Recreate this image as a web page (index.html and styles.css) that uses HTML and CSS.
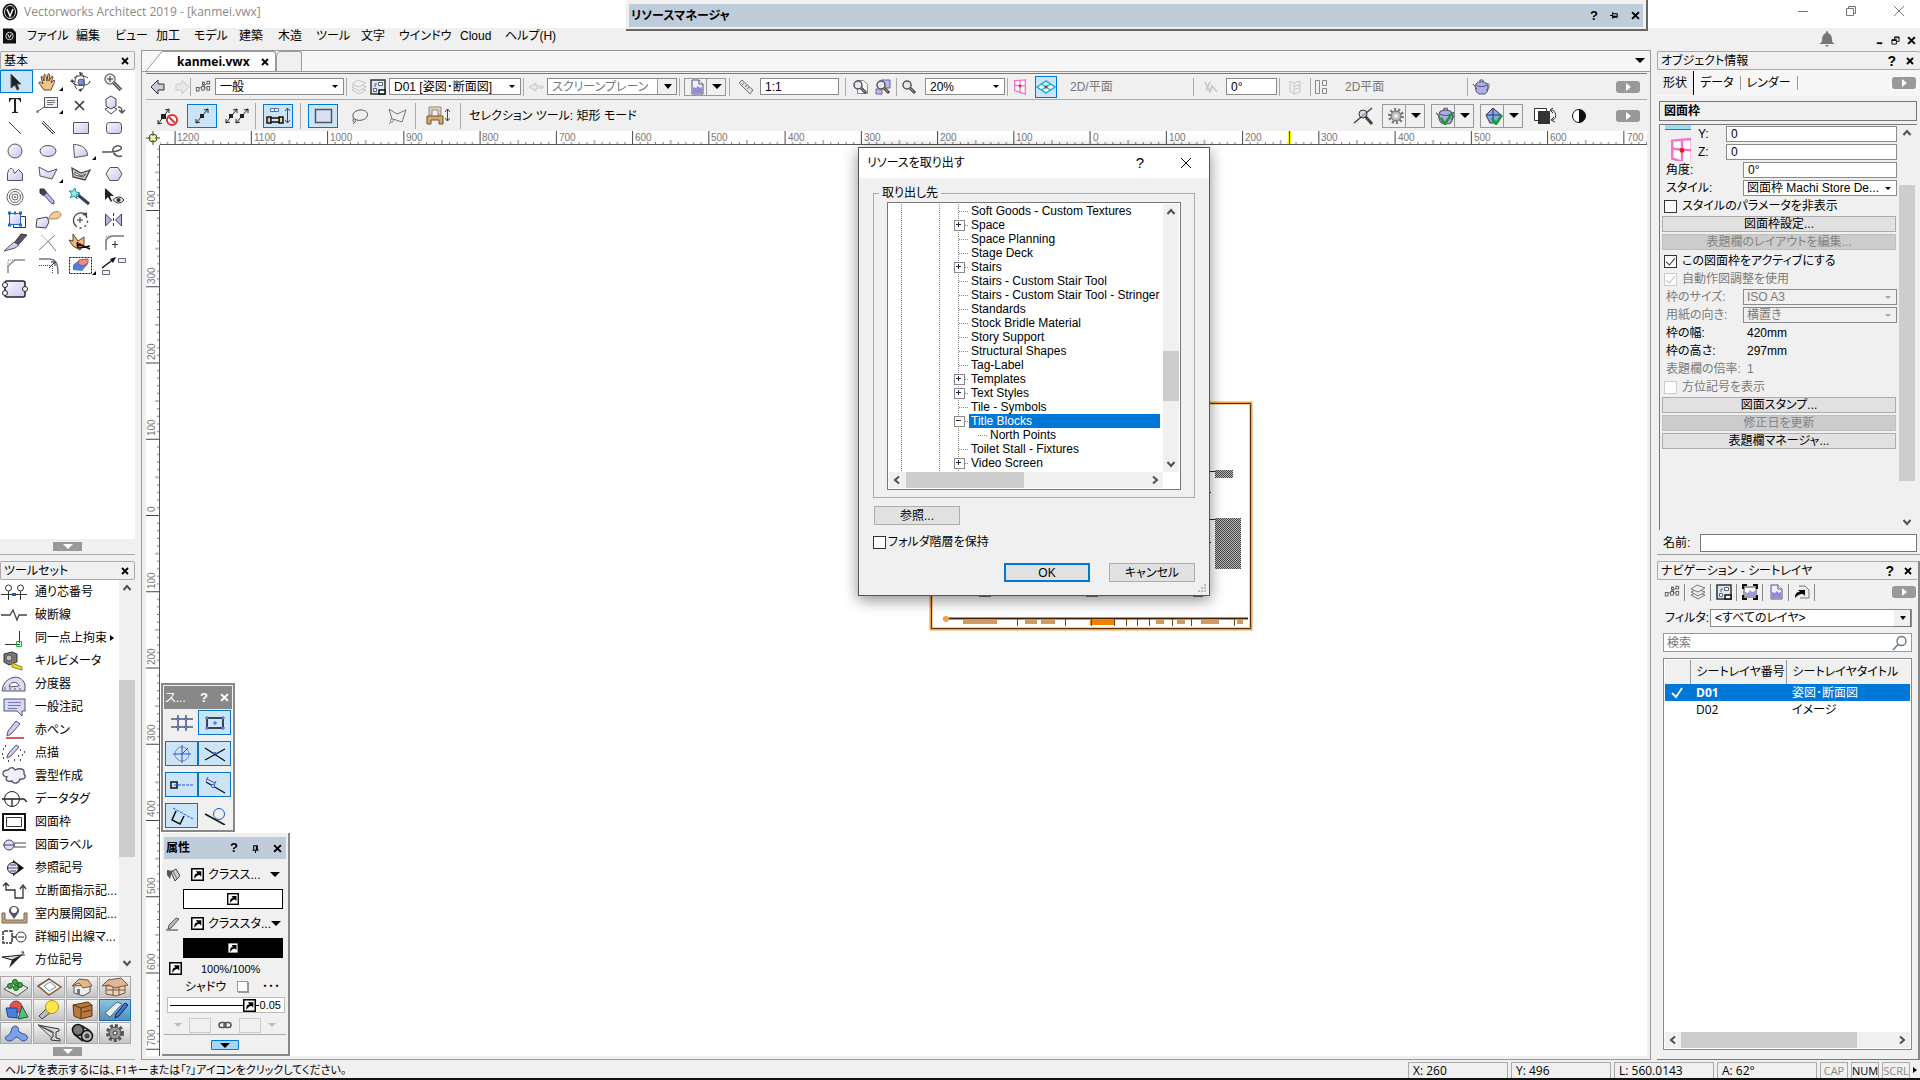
FILE: index.html
```html
<!DOCTYPE html>
<html lang="ja">
<head>
<meta charset="utf-8">
<title>Vectorworks Architect 2019 - [kanmei.vwx]</title>
<link rel="stylesheet" href="styles.css">
</head>
<body>
<svg class="defs" aria-hidden="true">
  <defs>
    <linearGradient id="lav" x1="0" y1="0" x2="1" y2="1"><stop offset="0" stop-color="#fbfbff"/><stop offset="1" stop-color="#c6c6f0"/></linearGradient>
    <symbol id="i-x" viewBox="0 0 8 8"><path d="M1 1l6 6M7 1l-6 6" stroke="currentColor" stroke-width="1.8" fill="none"/></symbol>
    <symbol id="i-pin" viewBox="0 0 10 10"><path d="M0 5h3M3 1.500v7M3 3h5v4h-5M3 6h5" stroke="currentColor" stroke-width="1.200" fill="none"/></symbol>
    <symbol id="i-up" viewBox="0 0 10 10"><path d="M1.500 7L5 3l3.500 4" stroke="#505050" stroke-width="2" fill="none"/></symbol>
    <symbol id="i-down" viewBox="0 0 10 10"><path d="M1.500 3L5 7l3.500-4" stroke="#505050" stroke-width="2" fill="none"/></symbol>
    <symbol id="i-left" viewBox="0 0 10 10"><path d="M7 1.500L3 5l4 3.500" stroke="#505050" stroke-width="2" fill="none"/></symbol>
    <symbol id="i-right" viewBox="0 0 10 10"><path d="M3 1.500L7 5l-4 3.500" stroke="#505050" stroke-width="2" fill="none"/></symbol>
    <symbol id="i-class" viewBox="0 0 18 16"><path d="M3 10l6-2 5-5M9 8l6 2M9 8V4" stroke="#666" fill="none"/><g fill="#f4f4f4" stroke="#555"><rect x="1.500" y="8.500" width="3" height="4"/><rect x="7.500" y="7.500" width="3" height="4"/><rect x="8.500" y="2.500" width="2" height="3"/><rect x="13.500" y="1.500" width="3" height="3"/><rect x="13.500" y="7.500" width="3" height="4"/></g></symbol>
    <symbol id="i-layers" viewBox="0 0 16 16"><g fill="#eee" stroke="#777"><path d="M1 11l6-3 8 3-7 4z"/><path d="M1 8l6-3 8 3-7 4z"/><path d="M1 5l6-4 8 3-7 4z"/></g></symbol>
    <symbol id="i-sheet" viewBox="0 0 16 16"><rect x="1" y="1" width="14" height="14" fill="#dde6f2" stroke="#333" stroke-width="1.500"/><path d="M3.500 9.500h3v3h-3zM8.500 3.500h4v3h-4z" fill="#fff" stroke="#567"/><path d="M5 8V5h2" fill="none" stroke="#567"/><path d="M9 11h6v4h-6z" fill="#fff" stroke="#111" stroke-width="1.500"/></symbol>
    <symbol id="i-view" viewBox="0 0 16 16"><rect x="2" y="3" width="12" height="10" fill="#fff" stroke="#444"/><path d="M3 12V8l3 1 2-3 2 2 3-1v5z" fill="#9a9ae0"/><path d="M1 5V1h4M11 1h4v4M15 11v4h-4M5 15H1v-4" fill="none" stroke="#111" stroke-width="2"/></symbol>
    <symbol id="i-doc" viewBox="0 0 16 16"><path d="M3 1h7l4 4v10H3z" fill="#eeeeff" stroke="#556"/><path d="M10 1v4h4" fill="#fff" stroke="#556"/><path d="M4 14V8l3 1 2-2 2 2 2-1v6z" fill="#8c8cd8"/></symbol>
    <symbol id="i-ref" viewBox="0 0 16 16"><path d="M5 2h6l4 4v8H6" fill="#eee" stroke="#777"/><path d="M1 14c0-5 2-6 5-6L4 6h7v6L9 10c-4 0-5 1-8 4z" fill="#000"/></symbol>
    <symbol id="i-glass" viewBox="0 0 16 16"><path d="M8 8l6 6" stroke="#444" stroke-width="3"/><path d="M8 8l5 5" stroke="#c9a45a" stroke-width="1"/><circle cx="6" cy="6" r="4" fill="#dfe8f4" stroke="#555" stroke-width="1.500"/></symbol>
    <symbol id="i-class-style" viewBox="0 0 12 12"><rect x=".7" y=".7" width="10.600" height="10.600" fill="#fff" stroke="#000" stroke-width="1.400"/><path d="M3 10c0-4 1-5 3-5L4.500 3H9.500v5L8 6.500C5.500 6.500 5 8 3 10z" fill="#000"/></symbol>
    <symbol id="i-pink" viewBox="0 0 16 18"><path d="M2 2l12-1v16L2 13z" fill="#fff" stroke="#f474c8" stroke-width="1.500"/><path d="M8 2v13M2 7l12 1" stroke="#f474c8" stroke-width="1.500"/><circle cx="8" cy="8" r="1.500" fill="#d22"/></symbol>
    <symbol id="i-teapot" viewBox="0 0 18 16"><path d="M4 5c2-3 9-3 11 0 2 4 1 8-2 10H7C3 13 3 8 4 5z" fill="#aeaee8" stroke="#557"/><path d="M5 10L1 5M15 5c3-2 3 5-1 6M4 6c3 2 8 2 11 0M8 3V1h3v2" stroke="#557" fill="none"/></symbol>
  </defs>
</svg>

<header class="titlebar">
  <svg class="logo" viewBox="0 0 16 18"><ellipse cx="8" cy="9" rx="7.500" ry="8.500" fill="#111"/><ellipse cx="8" cy="9" rx="5.500" ry="6.500" fill="none" stroke="#ddd"/><path d="M5 6l3 7 3-7" stroke="#fff" stroke-width="1.500" fill="none"/></svg>
  <h1>Vectorworks Architect 2019 - [kanmei.vwx]</h1>
  <div class="wincontrols">
    <button aria-label="最小化"><svg viewBox="0 0 12 12"><path d="M1 6.500h10" stroke="#777"/></svg></button>
    <button aria-label="元に戻す"><svg viewBox="0 0 12 12"><path d="M1.500 3.500h7v7h-7zM3.500 3V1.500h7v7H9" stroke="#777" fill="none"/></svg></button>
    <button aria-label="閉じる"><svg viewBox="0 0 12 12"><path d="M1 1l10 10M11 1L1 11" stroke="#777"/></svg></button>
  </div>
</header>

<nav class="menubar">
  <svg class="docicon" viewBox="0 0 14 16"><path d="M0 0h10l4 4v12H0z" fill="#111"/><circle cx="7" cy="8" r="4" fill="none" stroke="#ddd"/><path d="M5 6l2 4 2-4" stroke="#fff" fill="none"/></svg>
  <ul>
    <li>ファイル</li><li>編集</li><li>ビュー</li><li>加工</li><li>モデル</li><li>建築</li><li>木造</li><li>ツール</li><li>文字</li><li>ウインドウ</li><li>Cloud</li><li>ヘルプ(H)</li>
  </ul>
  <svg class="bell" viewBox="0 0 16 16"><path d="M8 0c1 0 1 1 1 2 3 1 4 4 4 7 0 2 1 3 3 4H0c2-1 3-2 3-4 0-3 1-6 4-7 0-1 0-2 1-2z" fill="#777"/><path d="M6 14h4l-2 2z" fill="#777"/></svg>
  <div class="mdi">
    <button aria-label="最小化"><svg viewBox="0 0 10 10"><path d="M2 8h6" stroke="#000" stroke-width="2"/></svg></button>
    <button aria-label="元に戻す"><svg viewBox="0 0 10 10"><path d="M1 4h5v5H1zM4 4V1h5v5H6M4 2h5M1 5h5" stroke="#000" fill="none"/></svg></button>
    <button aria-label="閉じる"><svg><use href="#i-x"/></svg></button>
  </div>
</nav>

<main class="workspace">
  <aside class="left">
    <section class="basic">
      <header class="phead"><h2>基本</h2><button aria-label="閉じる"><svg><use href="#i-x"/></svg></button></header>
      <div class="tools">
        <button class="on"><svg viewBox="0 0 28 20"><path d="M10 2v14l4-3 2 5 2-1-2-5h4z" fill="#222" stroke="#555"/></svg></button>
        <button class="more"><svg viewBox="0 0 28 20"><path d="M10 18L5 11c0-2 2-1 4 1L7 5c1-2 2 0 3 4V3c1-2 2 0 3 6l1-7c2-1 2 2 1 7l3-5c2 0 0 4-1 7l3-3c2 0-1 5-3 10z" fill="#f3c48c" stroke="#5b4632"/></svg></button>
        <button><svg viewBox="0 0 28 20"><path d="M13 1c5 0 6 17 1 17M5 9c0 6 18 6 18 0M10 3c-3 6-3 12 0 14M7 6c4-3 10-3 14 0" fill="none" stroke="#444"/><circle cx="14" cy="10" r="3" fill="#7c8fd8" stroke="#557"/><path d="M12 0l4 1-3 3zM3 10l2-3 3 3zM14 20l1-4-4 2z" fill="#444"/></svg></button>
        <button><svg viewBox="0 0 28 20"><path d="M13 10l8 8" stroke="#555" stroke-width="3.500"/><path d="M13 10l8 8" stroke="#bbb"/><circle cx="10" cy="7" r="5" fill="#eef" stroke="#777" stroke-width="1.500"/><path d="M7 7h6M10 4v6" stroke="#333"/></svg></button>

        <button><svg viewBox="0 0 28 20"><path d="M8 3h12v4h-1c0-2-1-3-4-3v12c0 1 1 1 2 1v1h-6v-1c1 0 2 0 2-1V4c-3 0-4 1-4 3H8z" fill="#222"/></svg></button>
        <button class="more"><svg viewBox="0 0 28 20"><path d="M10.500 2.500h13v10h-13z" fill="#eeeeff" stroke="#555"/><path d="M10 12l-7 5" stroke="#555"/><path d="M13 5.500h8M13 7.500h8M13 9.500h6" stroke="#777"/><circle cx="3.500" cy="16.500" r="1.500" fill="#888"/></svg></button>
        <button><svg viewBox="0 0 28 20"><path d="M8 6l9 9M17 6l-9 9" stroke="#243a30" stroke-width="1.500"/></svg></button>
        <button><svg viewBox="0 0 28 20"><path d="M5 14l6-3 6 3-6 5z" fill="#fff" stroke="#445"/><path d="M11 1l5 3v7l-5 3-5-3V4z" fill="url(#lav)" stroke="#445"/><path d="M18 12c3 0 4 1 4 5M19 15l3 3 3-3" stroke="#555" fill="none" stroke-width="1.500"/></svg></button>

        <button><svg viewBox="0 0 28 20"><path d="M8 4l12 12" stroke="#444"/></svg></button>
        <button><svg viewBox="0 0 28 20"><path d="M8 5l11 11M9 3l12 12" stroke="#444"/><path d="M8 4l12 12" stroke="#aaa"/></svg></button>
        <button><svg viewBox="0 0 28 20"><path d="M6.500 4.500h15v11h-15z" fill="url(#lav)" stroke="#555"/></svg></button>
        <button><svg viewBox="0 0 28 20"><rect x="6.500" y="4.500" width="15" height="11" rx="3" fill="url(#lav)" stroke="#555"/></svg></button>

        <button><svg viewBox="0 0 28 20"><circle cx="14" cy="10" r="7" fill="url(#lav)" stroke="#555"/></svg></button>
        <button><svg viewBox="0 0 28 20"><ellipse cx="14" cy="10" rx="8" ry="5.500" fill="url(#lav)" stroke="#555"/></svg></button>
        <button class="more"><svg viewBox="0 0 28 20"><path d="M6.500 3.500c8 0 14 4 14 11l-13 2z" fill="url(#lav)" stroke="#555"/></svg></button>
        <button><svg viewBox="0 0 28 20"><path d="M2 11h8c8 0 13-3 11-5-3-3-9 0-8 4 1 5 6 6 9 5" fill="none" stroke="#555" stroke-width="1.500"/></svg></button>

        <button><svg viewBox="0 0 28 20"><path d="M6.500 16.500v-7c2-7 5-7 7 0l4-4 4 4v7z" fill="url(#lav)" stroke="#555"/></svg></button>
        <button class="more"><svg viewBox="0 0 28 20"><path d="M5 3l9 5 9-3-5 10-12-3z" fill="url(#lav)" stroke="#555"/></svg></button>
        <button><svg viewBox="0 0 28 20"><path d="M5 4l9 5 9-3-5 10-12-3z" fill="#ccc" stroke="#444" stroke-width="1.300"/><path d="M8 8l6 4 5-2-3 3-8-2z" fill="#fff" stroke="#555"/></svg></button>
        <button><svg viewBox="0 0 28 20"><path d="M10 3.500h8l4 6.500-4 6.500h-8L6 10z" fill="url(#lav)" stroke="#555"/></svg></button>

        <button><svg viewBox="0 0 28 20"><g fill="none" stroke="#666"><circle cx="14" cy="10" r="8"/><circle cx="14" cy="10" r="5.500"/><circle cx="14" cy="10" r="3"/><circle cx="14" cy="10" r=".6"/></g></svg></button>
        <button><svg viewBox="0 0 28 20"><path d="M6 2l4 0 3 4-3 3-4-3z" fill="#444" stroke="#333"/><path d="M10 8l3-2 7 8v3l-3-1z" fill="#b9b9f0" stroke="#557"/></svg></button>
        <button><svg viewBox="0 0 28 20"><path d="M11 8l11 9" stroke="#345" stroke-width="3"/><path d="M8 1l1 4 4 1-4 2 1 4-3-3-4 2 2-4-3-3 4 0z" fill="#8ff0f0" stroke="#2b8f9c"/></svg></button>
        <button><svg viewBox="0 0 28 20"><path d="M5 1v12l3-3 3 5 1-1-2-5h4z" fill="#222"/><path d="M13 13c3-4 8-4 11 0-3 4-8 4-11 0z" fill="#ddd" stroke="#333"/><circle cx="18.500" cy="13" r="2" fill="#333"/></svg></button>

        <button><svg viewBox="0 0 28 20"><path d="M12.500 6.500h12v11h-12z" fill="#fff" stroke="#333"/><path d="M8.500 3.500h11v11h-11z" fill="url(#lav)" stroke="#1c6fc4"/><path d="M7 3h3M18 3h3M7 15h3M18 15h3M13 3h2M8 9h1M19 9h1" stroke="#1c6fc4" stroke-width="3"/></svg></button>
        <button><svg viewBox="0 0 28 20"><path d="M3 9l10-2 2 5-3 6-10-1z" fill="url(#lav)" stroke="#444"/><path d="M14 9l4-6c5-3 9-1 9 2-1 4-6 4-11 4z" fill="#f5cb98" stroke="#a9855c"/></svg></button>
        <button><svg viewBox="0 0 28 20"><path d="M18 4A7.500 7.500 0 1 0 10 17" fill="none" stroke="#444" stroke-width="1.300"/><path d="M19 6a7.500 7.500 0 0 1-7 12" fill="none" stroke="#444" stroke-width="1.500" stroke-dasharray="2 3"/><path d="M15 5l5-3v4z" fill="#444"/><path d="M10 10h6M13 7v6" stroke="#333"/></svg></button>
        <button><svg viewBox="0 0 28 20"><path d="M5.500 4v12l6-6zM21.500 4v12l-6-6z" fill="#b5b5ea" stroke="#445"/><path d="M13.500 3v15" stroke="#333" stroke-dasharray="3 2"/></svg></button>

        <button><svg viewBox="0 0 28 20"><path d="M14 9l6-8 6 1-9 10z" fill="#556" stroke="#333"/><path d="M3 18l10-9 5 3-4 3z" fill="#ccf" stroke="#555"/></svg></button>
        <button><svg viewBox="0 0 28 20"><path d="M5 17L21 2M14 8l8 10" stroke="#777"/><path d="M14 8L7 2" stroke="#bbc"/></svg></button>
        <button><svg viewBox="0 0 28 20"><path d="M6 1l5 7 6-4v7l-4 6-7-4-4-6 4 1z" fill="#f3b775" stroke="#5b4632"/><path d="M12 11l11 5M12 15l11-2M11 9a2 2 0 1 0 3 3 2 2 0 1 0-2 3" stroke="#111" fill="none" stroke-width="1.500"/></svg></button>
        <button><svg viewBox="0 0 28 20"><path d="M6 17V10c0-5 3-7 8-7h10" fill="none" stroke="#778" stroke-width="1.500"/><path d="M6 9V3h8" stroke="#888" fill="none" stroke-dasharray="1 1"/><path d="M12 11.500h6M15 8v7" stroke="#333"/></svg></button>

        <button><svg viewBox="0 0 28 20"><path d="M7 17v-7l7-6h10" fill="none" stroke="#889" stroke-width="1.500"/><path d="M7 10V4h8" stroke="#777" fill="none" stroke-dasharray="1 1"/></svg></button>
        <button><svg viewBox="0 0 28 20"><path d="M5 3h9c8 0 10 4 10 15" fill="none" stroke="#778" stroke-width="1.500"/><path d="M5 9.500h12M18.500 17V9" stroke="#444" fill="none" stroke-dasharray="1 1"/><path d="M15 12l6-6M17 6h4v4" stroke="#223" fill="none"/></svg></button>
        <button class="more"><svg viewBox="0 0 28 20"><rect x="2.500" y="1.500" width="22" height="16" fill="none" stroke="#111" stroke-dasharray="2 1"/><path d="M6 9l6-5 9-1v5l-6 7-9-1z" fill="#4b7fe0"/><path d="M12 4l9-1v4l-5 3-5-2z" fill="#f08a8a" stroke="#a55"/></svg></button>
        <button><svg viewBox="0 0 28 20"><path d="M2 12L15 2" stroke="#111" stroke-width="1.500"/><path d="M16 1l-6 2 3 4z" fill="#111"/><path d="M18.500 2.500h7v4h-7zM2.500 14.500h7v4h-7z" fill="#eef" stroke="#667"/></svg></button>

        <button><svg viewBox="0 0 28 20"><rect x="4" y="2" width="20" height="16" rx="2" fill="url(#lav)" stroke="#223" stroke-width="1.500"/><g fill="#fff" stroke="#223"><circle cx="4" cy="6" r="2.500"/><circle cx="4" cy="14" r="2.500"/><circle cx="24" cy="10" r="2.500"/></g></svg></button>
      </div>
      <button class="fold" aria-label="折りたたむ"></button>
    </section>

    <section class="toolset">
      <header class="phead"><h2>ツールセット</h2><button aria-label="閉じる"><svg><use href="#i-x"/></svg></button></header>
      <div class="setbody">
        <ul>
          <li><svg viewBox="0 0 28 20"><path d="M1 12.500h26M8.500 9v9M20.500 9v9" stroke="#333"/><circle cx="8.500" cy="6" r="3" fill="#fff" stroke="#333"/><circle cx="20.500" cy="6" r="3" fill="#fff" stroke="#333"/><path d="M12 11h4v3h-4z" fill="#25d"/></svg>通り芯番号</li>
          <li><svg viewBox="0 0 28 20"><path d="M1 10h9l3-5 4 10 2-5h8" stroke="#444" stroke-width="1.300" fill="none"/></svg>破断線</li>
          <li><svg viewBox="0 0 28 20"><path d="M5 16.500h15M19.500 3v12" stroke="#333"/><path d="M16.500 13.500h5v5h-5z" stroke="#1b3" fill="none"/></svg>同一点上拘束<i class="sub"></i></li>
          <li><svg viewBox="0 0 28 20"><path d="M4 3l8-2 5 2v8l-8 3-5-3z" fill="#777" stroke="#333"/><circle cx="9" cy="7" r="3" fill="#bbb" stroke="#555"/><path d="M12 12l10 4v3l-10-3z" fill="#ecd82c" stroke="#99801a"/></svg>キルビメータ</li>
          <li><svg viewBox="0 0 28 20"><path d="M2 17C3 2 22-2 25 11v6z" fill="#dcdcf8" stroke="#555"/><path d="M9 13c1-6 9-6 10-1z" fill="#fff" stroke="#556"/><path d="M5 16v-3M10 16v-2M15 16v-2M20 16v-2" stroke="#556"/></svg>分度器</li>
          <li><svg viewBox="0 0 28 20"><path d="M4 2h21v12h-3v5l-5-5H4z" fill="#d5d8fa" stroke="#556"/><path d="M8 5.500h13M8 8.500h13M8 11.500h9" stroke="#77a"/></svg>一般注記</li>
          <li><svg viewBox="0 0 28 20"><path d="M6 18h18" stroke="#c22" stroke-width="1.500"/><path d="M7 16l1-5 8-10 4 3-9 10z" fill="#cfcff4" stroke="#556"/></svg>赤ペン</li>
          <li><svg viewBox="0 0 28 20"><path d="M7 15l1-4 8-9 3 2-8 9z" fill="#cfcff4" stroke="#556"/><path d="M3 6h1M5 3h1M2 11h1M20 7h1M22 12h1M18 13h1M14 17h1M8 18h1M24 9h1M20 17h1M3 15h1" stroke="#111" stroke-width="1.500"/></svg>点描</li>
          <li><svg viewBox="0 0 28 20"><path d="M8 4c3-4 6-2 7 0 7-3 10 0 9 4 3 3 0 6-4 5-1 5-7 5-8 2-5 1-7-1-5-4C1 10 2 4 8 4z" fill="#eeeefc" stroke="#556" stroke-width="1.300"/></svg>雲型作成</li>
          <li><svg viewBox="0 0 28 20"><circle cx="12" cy="10" r="7.500" fill="#fff" stroke="#222"/><path d="M2 10h22l3 3M12 10v7" stroke="#222" stroke-width="1.300" fill="none"/></svg>データタグ</li>
          <li><svg viewBox="0 0 28 20"><path d="M3 2h22v16H3z" fill="#fff" stroke="#111" stroke-width="2"/><path d="M6.500 5.500h15v9h-15z" stroke="#333" fill="none"/></svg>図面枠</li>
          <li><svg viewBox="0 0 28 20"><circle cx="9" cy="10" r="5" fill="#dcdcf8" stroke="#445"/><path d="M3 10h12M14 8h12M14 12h12" stroke="#445"/></svg>図面ラベル</li>
          <li><svg viewBox="0 0 28 20"><path d="M13 2l11 8-11 8z" fill="#111"/><circle cx="13" cy="10" r="5.500" fill="#e6e6ff" stroke="#222"/><path d="M8 10h10M10 7h6M10 13h6" stroke="#446"/></svg>参照記号</li>
          <li><svg viewBox="0 0 28 20"><path d="M6 2v7h9v8h8V6M3 5l3-3 3 3M20 8l3-4 3 4" fill="none" stroke="#333" stroke-width="1.300"/></svg>立断面指示記...</li>
          <li><svg viewBox="0 0 28 20"><path d="M2 9h3v7h19V9h3v10H2z" fill="#c8a27a" stroke="#765"/><path d="M14 15L9 8c-1-8 11-8 10 0z" fill="#556"/><circle cx="14" cy="6" r="3" fill="#fff"/></svg>室内展開図記...</li>
          <li><svg viewBox="0 0 28 20"><path d="M8 4H3v12h5M9 4h3v12H9M12 10h4" fill="none" stroke="#333" stroke-width="1.500" stroke-dasharray="4 1"/><circle cx="21" cy="10" r="5" fill="#fff" stroke="#333"/><path d="M18 10h6" stroke="#333"/></svg>詳細引出線マ...</li>
          <li><svg viewBox="0 0 28 20"><path d="M2 7l20-2L9 18l3-8z" fill="#222"/><path d="M2 7l20-2-10 5z" fill="#ddd" stroke="#222"/><path d="M21 2h3l-2 3h3" stroke="#333" fill="none"/></svg>方位記号</li>
        </ul>
        <div class="vbar"><svg><use href="#i-up"/></svg><span class="track"><span class="thumb"></span></span><svg><use href="#i-down"/></svg></div>
      </div>
      <div class="sets">
        <button><svg viewBox="0 0 28 20"><path d="M2 12l11-8 13 7-11 8z" fill="#e6e6e6" stroke="#555"/><g fill="#3fae3a" stroke="#175a17"><circle cx="8" cy="9" r="2.500"/><circle cx="13" cy="5" r="2.500"/><circle cx="18" cy="8" r="2.500"/><circle cx="14" cy="11" r="2.500"/></g></svg></button>
        <button><svg viewBox="0 0 28 20"><path d="M3 9l11-7 12 8-12 8z" fill="#eef6fa" stroke="#8b5a2b" stroke-width="1.500"/><path d="M9 9l6-4 6 5-7 4z" fill="#fff" stroke="#79a"/></svg></button>
        <button><svg viewBox="0 0 28 20"><path d="M6 9v7l9 3 7-4V8z" fill="#eee" stroke="#555"/><path d="M4 9l7-7 9 1 4 6-9 2-4-5z" fill="#e8b586" stroke="#754"/><path d="M9 12h3v6H9z" fill="#777"/></svg></button>
        <button><svg viewBox="0 0 28 20"><path d="M5 9v8l10 2 9-3V8z" fill="#ecd2b4" stroke="#754"/><path d="M1 9l6-6 13-2 7 7-13 3-6-3z" fill="#dcb896" stroke="#754"/><path d="M5 13h19M12 10v8M18 10v8" stroke="#754"/></svg></button>
        <button><svg viewBox="0 0 28 20"><circle cx="14" cy="7" r="6" fill="#e25454" stroke="#833"/><path d="M4 8h11v10l-9-1z" fill="#4b7fe0" stroke="#248"/><path d="M20 6l6 11-10 2z" fill="#57c080" stroke="#175a37"/></svg></button>
        <button><svg viewBox="0 0 28 20"><path d="M4 16l7-7 4 4-8 6z" fill="#bbb" stroke="#444"/><circle cx="17" cy="7" r="6.500" fill="#ffe748" stroke="#a8941c"/></svg></button>
        <button><svg viewBox="0 0 28 20"><path d="M5 5l15-3 4 3v11l-11 3-7-3z" fill="#b9793e" stroke="#5a3515"/><path d="M5 5l8 3 11-3M13 8v10M15 12l8-2" stroke="#5a3515" fill="none"/></svg></button>
        <button class="on"><svg viewBox="0 0 28 20"><path d="M4 13L16 2l5 2L9 17z" fill="#e6eef5" stroke="#567"/><path d="M14 18l1-4 9-11 3 2-9 11z" fill="#3c78e0" stroke="#124"/></svg></button>
        <button><svg viewBox="0 0 28 20"><path d="M5 13c3-1 4-4 5-8 3-4 8-1 6 3l5 3c5 0 6 6 1 7-4 0-4-3-7-4-3 0-4 4-7 4-5 0-6-4-3-5z" fill="#7da2e8" stroke="#2c4f9c"/></svg></button>
        <button><svg viewBox="0 0 28 20"><path d="M3 2l21 4v2l-3 1v6l4 1v2l-9-1v-2l2-1V9z" fill="#d9d9d9" stroke="#333"/><path d="M3 2l14 13M3 2l15 8" stroke="#555"/></svg></button>
        <button><svg viewBox="0 0 28 20"><circle cx="10" cy="7" r="5.500" fill="#777" stroke="#111" stroke-width="1.500"/><path d="M6 11l9 7M14 3l8 5" stroke="#222" stroke-width="2"/><circle cx="19" cy="13" r="5.500" fill="#bbb" stroke="#111" stroke-width="1.500"/><circle cx="19" cy="13" r="2.500" fill="#444"/></svg></button>
        <button><svg viewBox="0 0 28 20"><circle cx="14" cy="10" r="7.500" fill="none" stroke="#555" stroke-width="3" stroke-dasharray="3 2"/><circle cx="14" cy="10" r="6" fill="#999" stroke="#444"/><circle cx="14" cy="10" r="2" fill="#eee" stroke="#333"/></svg></button>
      </div>
      <button class="fold" aria-label="折りたたむ"></button>
    </section>
  </aside>

  <section class="docwin">
    <div class="tabs">
      <svg class="tabedge" viewBox="0 0 18 20" preserveAspectRatio="none"><path d="M0 20L16 1h2v19z" fill="#fff"/><path d="M0 20L16 .5h2" fill="none" stroke="#999"/></svg>
      <div class="tab">kanmei.vwx <button aria-label="タブを閉じる"><svg><use href="#i-x"/></svg></button></div>
      <div class="newtab"></div>
      <i class="tri"></i>
    </div>

    <div class="viewbar">
      <div class="grp g1"><svg viewBox="0 0 16 16"><path d="M1 8l7-7v4h6v6H8v4z" fill="#ccd" stroke="#333"/></svg><svg viewBox="0 0 16 16"><path d="M15 8L8 1v4H2v6h6v4z" fill="#e8e8e8" stroke="#ccc"/></svg></div>
      <div class="grp g2"><svg><use href="#i-class"/></svg><span class="combo"><select aria-label="クラス"><option>一般</option></select></span></div>
      <div class="grp g3"><svg class="dim"><use href="#i-layers"/></svg><svg><use href="#i-sheet"/></svg><span class="combo"><select aria-label="レイヤ"><option>D01 [姿図･断面図]</option></select></span></div>
      <div class="grp g4"><svg class="dim" viewBox="0 0 16 16"><path d="M1 8l7-4v3h7v2H8v3z" fill="#ddd" stroke="#777"/></svg><span class="combo boxed big"><select class="gray" aria-label="作業平面"><option>スクリーンプレーン</option></select></span></div>
      <div class="grp g5"><button class="split"><svg><use href="#i-doc"/></svg><i class="tri"></i></button></div>
      <div class="grp g6"><svg viewBox="0 0 16 16"><path d="M1 4l3-3 11 10-3 4z" fill="#ddd" stroke="#777"/><path d="M4 6l2-2M7 8l2-2M9 10l2-2" stroke="#777"/></svg><input aria-label="縮尺" value="1:1"></div>
      <div class="grp g7"><svg viewBox="0 0 16 16"><path d="M5.500 1.500h6l4 4v9h-10z" fill="#fff" stroke="#888"/><use href="#i-glass"/></svg><svg viewBox="0 0 16 16"><path d="M6 1h9v8H6zM1 10h6v5H1z" fill="#b9b9e8" stroke="#66a"/><use href="#i-glass"/></svg></div>
      <div class="grp g8"><svg><use href="#i-glass"/></svg><span class="combo"><select aria-label="ズーム"><option>20%</option></select></span></div>
      <div class="grp g9"><svg><use href="#i-pink"/></svg><button class="toggle"><svg class="plane" viewBox="0 0 20 16"><path d="M1 8l9-6 9 6-9 6zM5.500 5l9 6M14.500 5l-9 6" fill="#e8fbff" stroke="#19b4d0" stroke-width="1.500"/><circle cx="10" cy="8" r="1.500" fill="#c22"/></svg></button><span class="graytext">2D/平面</span></div>
      <div class="grp g10"><svg class="dim" viewBox="0 0 16 16"><path d="M2 3l5 10 2-6 5 6M3 12L7 3" stroke="#777" fill="none" stroke-width="1.500"/></svg><input aria-label="角度" value="0°"></div>
      <div class="grp g11"><svg class="dim" viewBox="0 0 16 16"><path d="M2 2l4 2v11l-4-3zM6 4l6-2v11l-6 2" fill="#eee" stroke="#777"/><path d="M7 7l5-1M7 10l5-1" stroke="#777"/></svg></div>
      <div class="grp g12"><svg viewBox="0 0 16 16"><path d="M2.500 1.500h4v13h-4zM9.500 1.500h4v5h-4zM9.500 9.500h4v5h-4z" fill="none" stroke="#888"/></svg><span class="graytext">2D平面</span></div>
      <div class="grp g13"><svg><use href="#i-teapot"/></svg></div>
      <button class="pill" aria-label="設定"></button>
    </div>

    <div class="modebar">
      <div class="grp m1">
        <button><svg viewBox="0 0 24 20"><path d="M3 18L14 3M10 4l4-1v4M3 14v4l4-1" stroke="#222" fill="none"/><path d="M6 8h5v5H6z" fill="#222"/><circle cx="17" cy="14" r="5" fill="#fff" stroke="#d33" stroke-width="2"/><path d="M14 11l6 6" stroke="#d33" stroke-width="2"/></svg></button>
        <button class="on"><svg viewBox="0 0 24 20"><path d="M6 17L18 3M14 4l4-1v4M6 13v4l4-1" stroke="#222" fill="none"/><path d="M10 8h4v4h-4z" fill="#222"/></svg></button>
        <button><svg viewBox="0 0 24 20"><path d="M1 17L12 3M8 4l4-1v4M11 17L23 3M19 4l4-1v4M1 13v4l4-1M11 13v4l4-1" stroke="#222" fill="none"/><path d="M4 8h4v4H4zM15 8h4v4h-4z" fill="#222"/></svg></button>
      </div>
      <div class="grp m2"><button class="on"><svg viewBox="0 0 24 20"><path d="M4.500 2.500h4v3h-4zM8.500 2.500h4v3h-4z" fill="#eef" stroke="#47a"/><path d="M1 11h4v6H1zM13 11h4v6h-4z" fill="#f3cf95" stroke="#111" stroke-width="1.500"/><path d="M5 12h8v4H5z" fill="#cfe6f8" stroke="#111" stroke-width="1.300"/><path d="M21.500 3v14M19 5l2.500-3L24 5M19 14l2.500 3 2.500-3" stroke="#444" fill="none"/></svg></button></div>
      <div class="grp m3">
        <button class="on"><svg viewBox="0 0 24 20"><path d="M4.500 3.500h16v13h-16z" fill="#d6e2f2" stroke="#555" stroke-width="1.500"/></svg></button>
        <button><svg viewBox="0 0 24 20"><path d="M6 13c-3-4 0-9 7-9 8 0 9 8 1 10-3 1-5 0-7-1M6 13c-2 0-1 4 1 3 2-2-1-4-1-3zm1 3l-2 2" fill="none" stroke="#555"/></svg></button>
        <button><svg viewBox="0 0 24 20"><path d="M7 13L4 3l8 5 9-4-4 12-9-3M7 13c-2 0-2 3 0 3s2-3 0-3zM6 16l-2 2" fill="none" stroke="#777"/></svg></button>
      </div>
      <div class="grp m4"><button><svg viewBox="0 0 24 20"><path d="M3 1h12v8h-3V4H6v5H3z" fill="#ddd0be" stroke="#987"/><path d="M1 10h16v8h-4v-4H5v4H1z" fill="#dba866" stroke="#654"/><path d="M21.500 3v12M19 6l2.500-3L24 6M19 12l2.500 3 2.500-3" stroke="#444" fill="none"/></svg></button></div>
      <p>セレクション ツール: 矩形 モード</p>
      <div class="modes">
        <button class="wand"><svg viewBox="0 0 24 20"><path d="M2 17L20 2" stroke="#444" stroke-width="1.500"/><path d="M13 10l7 8" stroke="#444" stroke-width="3"/><circle cx="11" cy="8" r="4" fill="#bcd" fill-opacity=".6" stroke="#333"/></svg></button>
        <button class="split"><svg viewBox="0 0 20 18"><circle cx="10" cy="9" r="6.500" fill="none" stroke="#777" stroke-width="3" stroke-dasharray="2 2"/><circle cx="10" cy="9" r="5" fill="#bbb" stroke="#666"/><circle cx="10" cy="9" r="2" fill="#eee"/></svg><i class="tri"></i></button>
        <button class="split"><svg viewBox="0 0 20 18"><use href="#i-teapot"/><path d="M6 11l4 6 7-11" stroke="#1a9c2a" stroke-width="2.500" fill="none"/></svg><i class="tri"></i></button>
        <button class="split"><svg viewBox="0 0 20 18"><path d="M9 1l8 7-4 8H6L2 8z" fill="#84a9ee" stroke="#335"/><path d="M9 1v14M2 8h14" stroke="#335"/><path d="M8 11l4 6 6-9" stroke="#1a9c2a" stroke-width="2.500" fill="none"/></svg><i class="tri"></i></button>
        <button><svg viewBox="0 0 24 20"><path d="M1.500 2.500h12v12h-12z" fill="#fff" stroke="#333"/><path d="M5 5h12v13H5z" fill="#333"/><path d="M18 4c6 0 6 10 1 10M20 2l-3 2 3 3M21 11l-3 3 4 2" fill="none" stroke="#333"/></svg></button>
        <button><svg viewBox="0 0 24 20"><circle cx="12" cy="10" r="6.500" fill="#fff" stroke="#111"/><path d="M12 3.500a6.500 6.500 0 0 1 0 13z" fill="#111"/></svg></button>
      </div>
      <button class="pill" aria-label="設定"></button>
    </div>

    <div class="drawing">
      <svg class="origin" viewBox="0 0 14 14"><circle cx="7" cy="7" r="4" fill="#f6f6a0" stroke="#444"/><path d="M7 0v5M7 9v5M0 7h5M9 7h5" stroke="#444"/></svg>
      <svg class="hruler">
        <defs>
          <pattern id="ht" x="14.600" y="0" width="76.250" height="14" patternUnits="userSpaceOnUse"><path d="M.5 0v14" stroke="#444"/><path d="M8.100 11v3M15.700 11v3M23.300 11v3M31 11v3M38.600 9v5M46.200 11v3M53.800 11v3M61.500 11v3M69.100 11v3" stroke="#777"/></pattern>
          <pattern id="vt" x="0" y="65" width="14" height="76.250" patternUnits="userSpaceOnUse"><path d="M0 .5h14" stroke="#444"/><path d="M11 8.100h3M11 15.700h3M11 23.300h3M11 31h3M9 38.600h5M11 46.200h3M11 53.800h3M11 61.500h3M11 69.100h3" stroke="#777"/></pattern>
        </defs>
        <rect width="100%" height="14" fill="url(#ht)"/>
        <rect x="1128" width="3" height="14" fill="#f6f200"/><path d="M1129.500 0v14" stroke="#553"/>
        <g><text x="17" y="10">1200</text><text x="94" y="10">1100</text><text x="170" y="10">1000</text><text x="246" y="10">900</text><text x="322" y="10">800</text><text x="399" y="10">700</text><text x="475" y="10">600</text><text x="551" y="10">500</text><text x="628" y="10">400</text><text x="704" y="10">300</text><text x="780" y="10">200</text><text x="856" y="10">100</text><text x="933" y="10">0</text><text x="1009" y="10">100</text><text x="1085" y="10">200</text><text x="1161" y="10">300</text><text x="1238" y="10">400</text><text x="1314" y="10">500</text><text x="1390" y="10">600</text><text x="1467" y="10">700</text></g>
      </svg>
      <svg class="vruler">
        <rect width="14" height="100%" fill="url(#vt)"/>
        <g><text transform="translate(9 62) rotate(-90)">400</text><text transform="translate(9 139) rotate(-90)">300</text><text transform="translate(9 215) rotate(-90)">200</text><text transform="translate(9 291) rotate(-90)">100</text><text transform="translate(9 367) rotate(-90)">0</text><text transform="translate(9 444) rotate(-90)">100</text><text transform="translate(9 520) rotate(-90)">200</text><text transform="translate(9 596) rotate(-90)">300</text><text transform="translate(9 672) rotate(-90)">400</text><text transform="translate(9 749) rotate(-90)">500</text><text transform="translate(9 825) rotate(-90)">600</text><text transform="translate(9 901) rotate(-90)">700</text></g>
      </svg>
      <div class="canvas">
        <svg class="plan" viewBox="0 0 324 230">
          <defs><pattern id="hatch" width="2" height="2" patternUnits="userSpaceOnUse"><rect width="2" height="2" fill="#bbb"/><path d="M0 0h1v1H0zM1 1h1v1H1z" fill="#444"/></pattern></defs>
          <path d="M2 2h320v226H2z" fill="#fff" stroke="#f0a04a" stroke-width="3"/>
          <path d="M2.500 2.500h319v225H2.500z" fill="none" stroke="#5a3000"/>
          <path d="M280 70.500h6M280 118.500h6M280 91.500h2M280 141.500h2" stroke="#222"/>
          <path d="M286 69h18v8h-18zM286 117h26v51h-26z" fill="url(#hatch)"/>
          <path d="M50 194h12v2H50zM157 194h12v2h-12zM264 194h10v2h-10z" fill="#777"/>
          <path d="M14 217.500h305" stroke="#f08a1c" stroke-width="3"/>
          <path d="M14 217.500h305" stroke="#402000"/>
          <path d="M34 221h34M96 221h12M112 221h14M227 221h8M248 221h8M272 221h18M308 221h6" stroke="#d09a66" stroke-width="4"/>
          <path d="M161 221h24" stroke="#f08000" stroke-width="6"/>
          <path d="M88.500 218v7M136.500 218v7M162.500 218v7M185.500 218v7M197.500 218v7M208.500 218v7M220.500 218v7M243.500 218v7M262.500 218v7M305.500 218v7" stroke="#7a4200"/>
          <circle cx="17" cy="218" r="3" fill="#f0a04a"/>
        </svg>
      </div>
    </div>
  </section>

  <aside class="right">
    <section class="objinfo">
      <header class="phead"><h2>オブジェクト情報</h2><button aria-label="ヘルプ">?</button><button aria-label="閉じる"><svg><use href="#i-x"/></svg></button></header>
      <div class="otabs"><span class="sel">形状</span><span>データ</span><span>レンダー</span><button class="pill" aria-label="設定"></button></div>
      <h3>図面枠</h3>
      <div class="pane">
        <div class="form">
          <div class="coords">
            <svg viewBox="0 0 26 36"><path d="M0 0h26v4H0z" fill="#9fdcf3"/><path d="M0 4.500h26" stroke="#1a7ac0"/><svg x="4" y="9" width="17" height="20"><use href="#i-pink"/></svg></svg>
            <label for="oy">Y:</label><input id="oy" value="0">
            <label for="oz">Z:</label><input id="oz" value="0">
          </div>
          <div class="row"><label for="ang">角度:</label><input id="ang" value="0°"></div>
          <div class="row"><label for="sty">スタイル:</label><span class="combo"><select id="sty"><option>図面枠 Machi Store De...</option></select></span></div>
          <label class="check"><input type="checkbox">スタイルのパラメータを非表示</label>
          <button class="wide">図面枠設定...</button>
          <button class="wide" disabled>表題欄のレイアウトを編集...</button>
          <label class="check"><input type="checkbox" checked>この図面枠をアクティブにする</label>
          <label class="check off"><input type="checkbox" checked disabled>自動作図調整を使用</label>
          <div class="row off"><label for="siz">枠のサイズ:</label><span class="combo"><select id="siz" disabled><option>ISO A3</option></select></span></div>
          <div class="row off"><label for="ori">用紙の向き:</label><span class="combo"><select id="ori" disabled><option>横置き</option></select></span></div>
          <div class="row"><span>枠の幅:</span><output>420mm</output></div>
          <div class="row"><span>枠の高さ:</span><output>297mm</output></div>
          <div class="row off"><span>表題欄の倍率:</span><output>1</output></div>
          <label class="check off"><input type="checkbox" disabled>方位記号を表示</label>
          <button class="wide">図面スタンプ...</button>
          <button class="wide" disabled>修正日を更新</button>
          <button class="wide">表題欄マネージャ...</button>
        </div>
        <div class="vbar"><svg><use href="#i-up"/></svg><span class="track"><span class="thumb"></span></span><svg><use href="#i-down"/></svg></div>
      </div>
      <div class="namerow"><label for="nm">名前:</label><input id="nm"></div>
    </section>

    <section class="navi">
      <header class="phead"><h2>ナビゲーション - シートレイヤ</h2><button aria-label="ヘルプ">?</button><button aria-label="閉じる"><svg><use href="#i-x"/></svg></button></header>
      <div class="ntabs">
        <span><svg><use href="#i-class"/></svg></span><span><svg><use href="#i-layers"/></svg></span><span class="sel"><svg><use href="#i-sheet"/></svg></span><span><svg><use href="#i-view"/></svg></span><span><svg><use href="#i-doc"/></svg></span><span><svg><use href="#i-ref"/></svg></span>
        <button class="pill" aria-label="設定"></button>
      </div>
      <div class="nbody">
        <div class="filter"><label for="flt">フィルタ:</label><span class="combo raised"><select id="flt"><option>&lt;すべてのレイヤ&gt;</option></select></span></div>
        <div class="search"><input aria-label="検索" placeholder="検索"><svg viewBox="0 0 16 16"><circle cx="9.500" cy="6" r="4.500" fill="none" stroke="#578" stroke-width="1.300"/><path d="M6 9.500L1 15" stroke="#578" stroke-width="1.500"/></svg></div>
        <div class="sheetlist">
          <table>
            <thead><tr><th class="mark"></th><th class="num">シートレイヤ番号</th><th>シートレイヤタイトル</th></tr></thead>
            <tbody>
              <tr class="sel"><td><svg viewBox="0 0 12 12"><path d="M1 6l4 4 6-9" stroke="#fff" stroke-width="1.800" fill="none"/></svg></td><td><b>D01</b></td><td>姿図･断面図</td></tr>
              <tr><td></td><td>D02</td><td>イメージ</td></tr>
            </tbody>
          </table>
          <div class="hbar"><svg><use href="#i-left"/></svg><span class="track"><span class="thumb"></span></span><svg><use href="#i-right"/></svg></div>
        </div>
      </div>
    </section>
  </aside>
</main>

<footer class="status">
  <p>ヘルプを表示するには、F1キーまたは「?」アイコンをクリックしてください。</p>
  <span class="cell">X: 260</span><span class="cell">Y: 496</span><span class="cell">L: 560.0143</span><span class="cell">A: 62°</span>
  <span class="key dimkey">CAP</span><span class="key">NUM</span><span class="key dimkey">SCRL</span><i class="sub"></i>
</footer>

<section class="win resman">
  <header><h2>リソースマネージャ</h2><button aria-label="ヘルプ">?</button><button aria-label="固定"><svg><use href="#i-pin"/></svg></button><button aria-label="閉じる"><svg><use href="#i-x"/></svg></button></header>
</section>

<section class="win snap">
  <header><h2>ス...</h2><button aria-label="ヘルプ">?</button><button aria-label="閉じる"><svg><use href="#i-x"/></svg></button></header>
  <div class="snaps">
    <button><svg viewBox="0 0 24 18"><path d="M1 5h22M1 13h22M8 1v16M16 1v16" stroke="#111"/><path d="M7 4h2v2h-2zM15 4h2v2h-2zM7 12h2v2h-2zM15 12h2v2h-2z" fill="#fff" stroke="#25d"/></svg></button>
    <button class="on"><svg viewBox="0 0 24 18"><path d="M4 4h16v10H4z" stroke="#111" stroke-width="1.500" fill="none"/><path d="M3 3h2v2h-2zM19 3h2v2h-2zM3 13h2v2h-2zM19 13h2v2h-2zM11 8h2v2h-2z" fill="#fff" stroke="#25d"/></svg></button>
    <button class="on"><svg viewBox="0 0 24 18"><circle cx="12" cy="9" r="7" fill="none" stroke="#889"/><path d="M3 9h18M12 0v18M12 9l6-6" stroke="#25d"/></svg></button>
    <button class="on"><svg viewBox="0 0 24 18"><path d="M2 3l20 13M2 15L22 4" stroke="#111" stroke-width="1.300"/><circle cx="12" cy="9" r="1.500" fill="none" stroke="#25d"/></svg></button>
    <button class="on"><svg viewBox="0 0 24 18"><path d="M1 6h6v6H1z" stroke="#111" stroke-width="1.500" fill="none"/><path d="M4 9h19" stroke="#25d" stroke-dasharray="3 1"/></svg></button>
    <button class="on"><svg viewBox="0 0 24 18"><path d="M3 6l19 11" stroke="#111" stroke-width="1.300"/><path d="M3 5l2-4M4 3l8 4M11 9l2-4" stroke="#25d" fill="none"/><circle cx="10" cy="10" r="1.500" fill="#fff" stroke="#25d"/></svg></button>
    <button class="on"><svg viewBox="0 0 24 18"><path d="M6 4L2 13l8 4 4-8" stroke="#111" stroke-width="1.500" fill="none"/><path d="M3 1l20 11" stroke="#25d" stroke-dasharray="3 1"/></svg></button>
    <button><svg viewBox="0 0 24 18"><path d="M2 7l20 11" stroke="#111" stroke-width="1.500"/><circle cx="16" cy="7" r="5.500" fill="none" stroke="#25d"/></svg></button>
  </div>
</section>

<section class="win attrs">
  <header><h2>属性</h2><button aria-label="ヘルプ">?</button><button aria-label="固定"><svg class="upright"><use href="#i-pin"/></svg></button><button aria-label="閉じる"><svg><use href="#i-x"/></svg></button></header>
  <div class="arow"><svg viewBox="0 0 14 14"><path d="M5 4l5-3 4 7-5 5z" fill="#ccc" stroke="#444"/><path d="M7 3l4 8" stroke="#777"/><path d="M1 2l6 1-2 4-1 4-3-4z" fill="#555"/></svg><svg class="cs"><use href="#i-class-style"/></svg><span>クラスス...</span><i class="tri"></i></div>
  <button class="swatch"><svg><use href="#i-class-style"/></svg></button>
  <div class="arow"><svg viewBox="0 0 14 14"><path d="M0 13h12" stroke="#333"/><path d="M2 12l1-4 7-7 3 1-8 9z" fill="#bbb" stroke="#555"/></svg><svg class="cs"><use href="#i-class-style"/></svg><span>クラススタ...</span><i class="tri"></i></div>
  <button class="swatch black"><svg><use href="#i-class-style"/></svg></button>
  <div class="opacity"><svg><use href="#i-class-style"/></svg><span>100%/100%</span></div>
  <div class="shadow"><label for="shd">シャドウ</label><input id="shd" type="checkbox"><span>･･･</span></div>
  <div class="weight"><span class="line"></span><svg><use href="#i-class-style"/></svg><span class="dash"></span>0.05</div>
  <div class="ends"><i class="tri"></i><span></span><svg viewBox="0 0 14 8"><rect x="1" y="1.500" width="7" height="5" rx="2.500" fill="none" stroke="#555" stroke-width="1.500"/><rect x="6" y="1.500" width="7" height="5" rx="2.500" fill="none" stroke="#555" stroke-width="1.500"/></svg><span></span><i class="tri"></i></div>
  <div class="afoot"><button aria-label="展開"><i class="tri"></i></button></div>
</section>

<section class="win dialog">
  <header><h2>リソースを取り出す</h2><button aria-label="ヘルプ">?</button><button aria-label="閉じる"><svg viewBox="0 0 12 12"><path d="M1 1l10 10M11 1L1 11" stroke="#000"/></svg></button></header>
  <fieldset>
    <legend>取り出し先</legend>
    <div class="tree">
      <ul>
        <li><i></i><span>Soft Goods - Custom Textures</span></li>
        <li class="plus"><i></i><span>Space</span></li>
        <li><i></i><span>Space Planning</span></li>
        <li><i></i><span>Stage Deck</span></li>
        <li class="plus"><i></i><span>Stairs</span></li>
        <li><i></i><span>Stairs - Custom Stair Tool</span></li>
        <li><i></i><span>Stairs - Custom Stair Tool - Stringer</span></li>
        <li><i></i><span>Standards</span></li>
        <li><i></i><span>Stock Bridle Material</span></li>
        <li><i></i><span>Story Support</span></li>
        <li><i></i><span>Structural Shapes</span></li>
        <li><i></i><span>Tag-Label</span></li>
        <li class="plus"><i></i><span>Templates</span></li>
        <li class="plus"><i></i><span>Text Styles</span></li>
        <li><i></i><span>Tile - Symbols</span></li>
        <li class="minus sel"><i></i><span>Title Blocks</span></li>
        <li class="child"><i></i><span>North Points</span></li>
        <li><i></i><span>Toilet Stall - Fixtures</span></li>
        <li class="plus"><i></i><span>Video Screen</span></li>
      </ul>
      <div class="vbar"><svg><use href="#i-up"/></svg><span class="track"><span class="thumb"></span></span><svg><use href="#i-down"/></svg></div>
      <div class="hbar"><svg><use href="#i-left"/></svg><span class="track"><span class="thumb"></span></span><svg><use href="#i-right"/></svg></div>
    </div>
  </fieldset>
  <button class="btn browse">参照...</button>
  <label class="check"><input type="checkbox">フォルダ階層を保持</label>
  <footer><button class="btn default">OK</button><button class="btn">キャンセル</button></footer>
  <svg class="grip" viewBox="0 0 9 9"><path d="M6 0h2v2H6zM3 3h2v2H3zM6 3h2v2H6zM0 6h2v2H0zM3 6h2v2H3zM6 6h2v2H6z" fill="#bbb"/></svg>
</section>
</body>
</html>
```
FILE: styles.css
```css
* { box-sizing: border-box; }
body {
  margin: 0;
  min-height: 100vh;
  display: flex;
  flex-direction: column;
  position: relative;
  background: #f0f0f0;
  color: #000;
  font: 12px/14px "Liberation Sans", "Noto Sans CJK JP", sans-serif;
  font-feature-settings: "palt";
  overflow: hidden;
}
h1, h2, h3, p, ul { margin: 0; padding: 0; font: inherit; }
ul { list-style: none; }
button, input, select {
  font: inherit;
  font-feature-settings: inherit;
  color: inherit;
  margin: 0;
  padding: 0;
  border: 0;
  border-radius: 0;
  background: none;
  appearance: none;
}
svg { display: block; flex: none; }
.defs { position: absolute; width: 0; height: 0; }
h2 { flex: 1; white-space: nowrap; }

/* Shared parts */
.tri { border: 5px solid transparent; border-top-color: #000; border-bottom: 0; width: 10px; height: 5px; flex: none; }
.sub { border: 3px solid transparent; border-left: 4px solid #000; border-right: 0; flex: none; }
.combo { position: relative; display: flex; min-width: 0; }
.combo select, .viewbar input, .form input:not([type]), .form .combo select {
  width: 100%;
  height: 17px;
  background: #fff;
  border: 1px solid #8a8a8a;
  padding: 0 4px;
  line-height: 14px;
}
.combo::after {
  content: "";
  position: absolute;
  right: 6px;
  top: 7px;
  border: 3px solid transparent;
  border-top-color: #000;
  border-bottom: 0;
  pointer-events: none;
}
.combo.big::after { border-width: 5px 4px 0; right: 5px; top: 6px; }
.combo.boxed select { background: linear-gradient(to left, #f0f0f0 18px, #999 18px 19px, #fff 19px); }
.pill { width: 24px; height: 12px; border-radius: 3px; background: #999; display: flex; align-items: center; justify-content: center; flex: none; }
.pill::after { content: ""; border: 4px solid transparent; border-left: 5px solid #fff; border-right: 0; }
.fold { width: 29px; height: 9px; background: #999; display: flex; align-items: center; justify-content: center; align-self: center; }
.fold::after { content: ""; border: 5px solid transparent; border-top-color: #fff; border-bottom: 0; }
.phead {
  display: flex;
  align-items: center;
  gap: 12px;
  height: 19px;
  padding: 0 5px 0 3px;
  border: 1px solid #aaa;
  border-radius: 2px;
}
.phead button { font-weight: bold; font-size: 14px; }
.phead svg { width: 8px; height: 8px; }
.vbar, .hbar { display: flex; align-items: center; background: #f0f0f0; flex: none; }
.vbar { flex-direction: column; width: 16px; padding: 3px 0; }
.hbar { height: 16px; padding: 0 3px; }
.vbar svg, .hbar svg { width: 10px; height: 10px; }
.track { flex: 1; position: relative; align-self: stretch; display: flex; }
.vbar .track { flex-direction: column; }
.thumb { background: #cdcdcd; }
.check { display: flex; align-items: center; gap: 5px; height: 18px; }
input[type="checkbox"] {
  width: 13px;
  height: 13px;
  border: 1px solid #333;
  background: #fff;
  display: flex;
  justify-content: center;
  flex: none;
}
input[type="checkbox"]:checked::after {
  content: "";
  width: 4px;
  height: 8px;
  border: solid #333;
  border-width: 0 1px 1px 0;
  rotate: 40deg;
}
input[type="checkbox"]:disabled { border-color: #ccc; }
input[type="checkbox"]:disabled::after { border-color: #bbb; }
.off { color: #7a7a7a; }

/* Title and menu */
.titlebar { height: 28px; background: #fff; display: flex; align-items: flex-start; padding: 2px 15px 0 2px; }
.logo { width: 16px; height: 20px; }
.titlebar h1 { flex: 1; margin-left: 6px; font: 12px/20px "Open Sans", "Noto Sans", sans-serif; color: #8a8a8a; }
.wincontrols { display: flex; gap: 36px; padding-top: 3px; }
.wincontrols svg { width: 12px; height: 12px; }
.menubar { height: 22px; display: flex; align-items: flex-start; padding-left: 3px; }
.docicon { width: 13px; height: 16px; }
.menubar ul {
  flex: 1;
  margin-left: 11px;
  display: grid;
  grid-template-columns: 49px 39px 41px 38px 45px 39px 38px 45px 38px 61px 45px 60px;
  white-space: nowrap;
  line-height: 16px;
}
.bell { width: 16px; height: 16px; margin: 3px 40px 0 0; }
.mdi { display: flex; gap: 7px; padding: 8px 4px 0 0; }
.mdi svg { width: 9px; height: 9px; }

/* Workspace */
.workspace { flex: 1; display: grid; grid-template-columns: 135px minmax(0, 1fr) 263px; column-gap: 6px; }
.left { display: flex; flex-direction: column; padding-top: 1px; }
.basic { flex: 1; display: flex; flex-direction: column; border-bottom: 1px solid #aaa; }
.basic .fold { margin: 3px 0; }
.tools { flex: 1; background: #fff; display: grid; grid-template-columns: repeat(4, 33px); grid-auto-rows: 23px; align-content: start; }
.tools button { position: relative; display: flex; align-items: center; justify-content: center; padding-right: 3px; border: 1px solid transparent; }
.tools button.on { background: #cce4f7; border-color: #0078d7; }
.tools svg { width: 28px; height: 20px; }
.more::after { content: ""; position: absolute; right: 2px; bottom: 1px; width: 4px; height: 4px; background: #000; clip-path: polygon(100% 0, 100% 100%, 0 100%); }
.toolset { display: flex; flex-direction: column; padding: 6px 0 3px; border-bottom: 1px solid #aaa; margin-bottom: 2px; }
.setbody { display: flex; background: #fff; margin-bottom: 5px; }
.setbody ul { flex: 1; }
.setbody li { height: 23px; display: flex; align-items: center; gap: 7px; white-space: nowrap; }
.setbody li svg { width: 28px; height: 20px; }
.setbody .sub { margin-left: -4px; }
.setbody .thumb { margin-top: 87px; height: 177px; }
.sets { display: grid; grid-template-columns: repeat(4, 32px); gap: 1px; margin-bottom: 3px; }
.sets button { height: 22px; border: 1px solid #aaa; background: linear-gradient(#f4f4f4, #c4c4c4); display: flex; justify-content: center; align-items: center; }
.sets button.on { background: linear-gradient(#8cc4e0, #5591b4); border-color: #1a6faf; }
.sets svg { width: 28px; height: 20px; }

/* Document window */
.docwin { display: flex; flex-direction: column; border: 1px solid #999; padding: 0 3px 3px 4px; margin-bottom: 2px; min-width: 0; }
.tabs { height: 21px; background: #f7f7f7; border-bottom: 1px solid #999; display: flex; align-items: flex-end; margin: 0 -3px 0 -4px; padding: 0 5px 0 4px; }
.tabs > .tri { margin: 0 0 8px auto; }
.tabedge { width: 18px; height: 20px; }
.tab { height: 20px; width: 112px; background: #fff; border: solid #999; border-width: 1px 1px 0 0; border-radius: 0 3px 0 0; padding-left: 13px; display: flex; align-items: center; justify-content: space-between; padding-right: 6px; font: bold 12px/18px "Open Sans", "Noto Sans", sans-serif; }
.tab svg { width: 8px; height: 8px; }
.newtab { height: 20px; width: 26px; border: 1px solid #999; border-bottom: 0; border-radius: 5px 3px 0 0; background: #f0f0f0; }
.viewbar, .modebar { display: flex; align-items: center; flex: none; }
.viewbar { height: 27px; margin-top: 1px; border-top: 1px solid #777; border-bottom: 1px solid #aaa; padding-right: 7px; }
.viewbar svg { width: 16px; height: 16px; }
.grp { display: flex; align-items: center; gap: 4px; border-right: 1px solid #aaa; height: 18px; }
.grp .combo { flex: 1; }
.viewbar .grp { padding: 0 2px 0 4px; flex: none; }
.viewbar .g1 { width: 45px; gap: 8px; }
.g2 { width: 156px; }
.g3 { width: 177px; }
.g3, .g4 { gap: 3px; }
.g4 { width: 156px; }
.g5 { width: 50px; }
.g6 { width: 116px; }
.viewbar .g6 { padding: 0 6px 0 8px; gap: 6px; }
.g7 { width: 51px; }
.viewbar .g7 { gap: 7px; padding-left: 6px; }
.g8 { width: 111px; gap: 8px; }
.g9 { width: 186px; }
.viewbar .g9 { gap: 7px; }
.g10 { width: 86px; }
.viewbar .g10 { padding-left: 9px; gap: 7px; }
.g11 { width: 31px; justify-content: center; }
.g12 { width: 157px; }
.viewbar .g12 { gap: 10px; padding-left: 2px; }
.viewbar .g13 { flex: 1; border: 0; padding-left: 4px; }
.viewbar .g13 svg { width: 18px; }
.dim { opacity: .35; }
.gray, .graytext { color: #777; }
.graytext { margin-left: 6px; }
.toggle { width: 22px; height: 22px; border: 1px solid #0078d7; background: #cce4f7; display: flex; align-items: center; justify-content: center; }
.toggle .plane { width: 20px; }
.split { display: flex; align-items: center; justify-content: space-around; width: 42px; height: 18px; border: 1px solid #999; background: linear-gradient(to left, transparent 18px, #999 18px 19px, transparent 19px); }
.modebar { height: 31px; padding: 0 7px 0 2px; }
.modebar .grp { height: 26px; padding: 0 7px; }
.modebar .m1 { width: 108px; padding-left: 4px; gap: 5px; }
.modebar .m2 { width: 45px; }
.modebar .m3 { width: 115px; gap: 7px; }
.modebar .m4 { width: 45px; }
.modebar .grp button { width: 30px; height: 24px; display: flex; justify-content: center; align-items: center; border: 1px solid transparent; flex: none; }
.modebar .grp button.on { background: #cce4f7; border-color: #0078d7; }
.modebar .grp svg { width: 24px; height: 20px; }
.modebar p { flex: 1; margin-left: 8px; white-space: nowrap; }
.modes { display: flex; align-items: center; gap: 6px; margin-right: 25px; }
.modes button + button:not(.split) { margin-left: 4px; }
.modes svg { width: 24px; height: 20px; }
.modes .split { width: 43px; height: 24px; }
.modes .split svg { width: 20px; height: 18px; }
.drawing { flex: 1; display: grid; grid-template-columns: 14px minmax(0, 1fr); grid-template-rows: 14px minmax(0, 1fr); background: #fff; }
.origin { width: 14px; height: 14px; background: #fafafa; }
.hruler { width: 100%; height: 14px; border-bottom: 1px solid #555; }
.vruler { width: 14px; height: 100%; border-right: 1px solid #555; }
.hruler text, .vruler text { font: 10px "Liberation Sans Narrow", "Liberation Sans", sans-serif; fill: #777; }
.canvas { position: relative; overflow: hidden; }
.plan { position: absolute; left: 769px; top: 256px; width: 324px; height: 230px; }

/* Right column */
.right { display: flex; flex-direction: column; padding-top: 1px; }
.objinfo { border-bottom: 1px solid #999; padding-bottom: 2px; margin-bottom: 6px; }
.objinfo .phead, .navi .phead { border-right: 0; padding-right: 6px; gap: 10px; }
.otabs { display: flex; align-items: center; height: 26px; background: #f7f7f7; padding-right: 4px; }
.otabs span { padding: 0 6px; border-right: 1px solid #999; }
.otabs .sel { background: #f0f0f0; border-color: #000; height: 24px; line-height: 24px; }
.otabs .pill { margin-left: auto; }
.objinfo h3 { height: 20px; border: 1px solid #777; margin: 5px 3px 3px 2px; padding: 0 4px; font-weight: bold; line-height: 18px; }
.pane { display: flex; height: 406px; margin: 0 3px 4px 2px; padding-right: 2px; border: solid #777; border-width: 1px 0 0 1px; }
.form { flex: 1; padding: 0 2px; }
.form input:not([type]) { height: 16px; }
.coords { display: grid; grid-template-columns: 34px 28px 1fr; grid-auto-rows: 18px; align-items: center; padding-left: 2px; }
.coords svg { grid-row: span 2; width: 26px; height: 36px; margin-left: 1px; }
.row { display: grid; grid-template-columns: 77px 1fr; align-items: center; height: 18px; padding-left: 4px; white-space: nowrap; }
.row output { padding-left: 4px; }
.form .combo select { height: 16px; padding: 0 3px; }
.form select:disabled { background: #f0f0f0; color: #7a7a7a; opacity: 1; }
.form .off .combo::after { opacity: .3; }
.form .check { padding-left: 2px; }
.wide { display: block; width: calc(100% - 1px); height: 16px; margin: 1px 0 2px; border: 1px solid #adadad; background: #e1e1e1; line-height: 13px; }
.wide:disabled { background: #ccc; border-color: #bfbfbf; color: #838383; }
.pane .thumb { margin-top: 47px; height: 296px; }
.namerow { display: flex; align-items: center; gap: 10px; padding: 0 3px 0 6px; }
.namerow input { flex: 1; height: 18px; border: 1px solid #777; background: #fff; }
.navi { flex: 1; display: flex; flex-direction: column; border-right: 2px solid #888; border-bottom: 1px solid #777; margin-bottom: 2px; }
.ntabs { display: flex; align-items: center; height: 22px; padding: 2px 2px 0; }
.ntabs span { width: 26px; height: 17px; display: flex; justify-content: center; border-right: 1px solid #888; }
.ntabs svg { width: 16px; height: 16px; }
.ntabs .pill { margin-left: auto; }
.nbody { flex: 1; display: flex; flex-direction: column; padding: 7px 6px 9px; }
.filter { display: grid; grid-template-columns: 45px 1fr; align-items: center; padding-left: 2px; white-space: nowrap; }
.filter select { height: 18px; }
.raised::after { border-width: 4px 3px 0; z-index: 1; }
.raised::before { content: ""; position: absolute; right: 1px; top: 1px; width: 16px; height: 16px; background: #f0f0f0; border: solid #777; border-width: 0 1px 1px 0; pointer-events: none; z-index: 1; }
.search { display: flex; align-items: center; height: 19px; margin: 6px 0; padding: 0 3px; background: #fff; border: 1px solid #999; }
.search input { flex: 1; }
.search input::placeholder { color: #777; }
.search svg { width: 16px; height: 16px; }
.sheetlist { flex: 1; display: flex; flex-direction: column; justify-content: space-between; background: #fff; border: 1px solid #888; padding: 1px; }
.sheetlist table { border-collapse: collapse; width: 100%; table-layout: fixed; white-space: nowrap; }
.sheetlist th { height: 24px; background: #f0f0f0; font-weight: normal; text-align: left; padding: 0 6px; }
.sheetlist th + th { border-left: 1px solid #999; }
.mark { width: 25px; }
.num { width: 96px; }
.sheetlist td { height: 17px; padding: 0 6px; }
.sheetlist td:nth-child(2) { font-family: "Open Sans", "Noto Sans", sans-serif; }
.sheetlist td svg { width: 12px; height: 12px; }
.sheetlist .sel { background: #0078d7; color: #fff; }
.navi .thumb { width: 176px; margin-left: 3px; }

/* Status bar */
.status { height: 18px; display: flex; align-items: stretch; gap: 3px; border-bottom: 2px solid #111; padding-right: 3px; font: 12px/16px "Open Sans", "Noto Sans CJK JP", sans-serif; }
.status p { flex: 1; padding-left: 5px; font-size: 11px; font-feature-settings: "palt"; white-space: nowrap; }
.cell { width: 100px; border: 1px solid #aaa; border-bottom: 0; padding-left: 4px; }
.key { width: 28px; border: 1px solid #aaa; border-bottom: 0; font-size: 11px; text-align: center; }
.dimkey { color: #888; }
.status .sub { align-self: center; }

/* Floating windows */
.win { position: absolute; background: #f0f0f0; }
.win header { display: flex; align-items: center; }
.win header svg { width: 9px; height: 9px; }
.win header button { font-weight: bold; font-size: 13px; }
.resman { left: 626px; top: 0; width: 1022px; height: 31px; border: solid #666; border-width: 0 2px 2px 0; padding: 4px 3px 2px; }
.resman header { height: 23px; background: #bfcddb; padding: 0 3px 0 2px; gap: 12px; font-weight: bold; }
.snap { left: 161px; top: 683px; width: 74px; height: 149px; border: 2px solid #888; }
.snap header { height: 23px; margin: 1px; background: #888; color: #fff; padding: 0 3px 0 1px; gap: 12px; }
.snap h2 { flex: 1 0 auto; }
.snaps { display: grid; grid-template-columns: 33px 33px; grid-auto-rows: 25px; row-gap: 6px; padding: 0 2px; }
.snaps button { display: flex; justify-content: center; align-items: center; border: 1px solid transparent; }
.snaps button.on { background: #cce4f7; border-color: #0a74c4; }
.snaps svg { width: 24px; height: 18px; }
.attrs { left: 162px; top: 833px; width: 128px; height: 223px; border: solid #888; border-width: 0 2px 2px 0; padding: 4px 2px 0; display: flex; flex-direction: column; }
.attrs header { height: 22px; background: #bfcddb; padding: 0 4px 0 2px; margin-bottom: 1px; gap: 13px; font-weight: bold; flex: none; }
.attrs .upright { rotate: -90deg; }
.arow { display: flex; align-items: center; height: 29px; padding: 0 6px 0 2px; }
.arow svg { width: 14px; height: 14px; }
.arow .cs { width: 13px; height: 13px; margin: 0 4px 0 11px; }
.arow span { flex: 1; white-space: nowrap; }
.swatch { width: 100px; height: 20px; margin-left: 19px; border: 1px solid #000; background: #fff; display: flex; align-items: center; justify-content: center; flex: none; }
.swatch svg { width: 12px; height: 12px; }
.swatch.black { background: #000; }
.opacity { display: flex; align-items: center; gap: 19px; height: 21px; padding-left: 5px; font-size: 11px; }
.opacity svg { width: 13px; height: 13px; }
.shadow { display: flex; align-items: center; height: 15px; padding-left: 21px; white-space: nowrap; }
.shadow input[type="checkbox"] { width: 11px; height: 11px; border-color: #999; margin: 0 14px 0 auto; box-shadow: 1px 1px #999; }
.shadow span { margin-right: 6px; font-weight: bold; }
.weight { display: flex; align-items: center; height: 16px; margin: 3px 1px 3px 3px; padding: 0 3px 0 2px; background: #fff; border: 1px solid #bbb; font-size: 11px; }
.weight .line { flex: 1; height: 1px; background: #000; }
.weight svg { width: 13px; height: 13px; }
.weight .dash { width: 3px; height: 1px; background: #000; margin-right: 1px; }
.ends { display: flex; align-items: center; justify-content: space-between; height: 18px; padding: 0 10px; }
.ends .tri { border-width: 4px 4px 0; width: 8px; border-top-color: #bbb; }
.ends span { width: 22px; height: 15px; border: 1px solid #ccc; }
.ends svg { width: 14px; height: 8px; }
.afoot { border-top: 1px solid #aaa; display: flex; justify-content: center; padding-top: 5px; }
.afoot button { width: 28px; height: 10px; border: 1px solid #0078d7; background: #a9d6f7; display: flex; align-items: center; justify-content: center; border-radius: 1px; }

/* Import dialog */
.dialog { left: 858px; top: 147px; width: 352px; height: 449px; border: 1px solid #555; box-shadow: 0 4px 14px rgba(0, 0, 0, .45); padding: 0 14px; }
.dialog > header { height: 30px; margin: 0 -14px; padding: 0 17px 0 8px; background: #fff; gap: 36px; }
.dialog > header svg { width: 12px; height: 12px; }
.dialog > header button { font-weight: normal; font-size: 15px; }
.dialog fieldset { margin: 8px 0 0; padding: 2px 13px 7px 13px; border: 1px solid #aaa; min-width: 0; }
.dialog legend { padding: 0 3px; margin-left: -8px; height: 14px; line-height: 14px; }
.tree { display: grid; grid-template-columns: minmax(0, 1fr) 16px; background: #fff; border: 1px solid #777; padding: 1px; }
.tree ul {
  overflow: hidden;
  background:
    repeating-linear-gradient(#888 0 1px, transparent 1px 2px) 12px 0 / 1px 100% no-repeat,
    repeating-linear-gradient(#888 0 1px, transparent 1px 2px) 50px 0 / 1px 100% no-repeat,
    repeating-linear-gradient(#888 0 1px, transparent 1px 2px) 69px 0 / 1px 100% no-repeat;
}
.tree li { display: flex; align-items: center; height: 14px; padding-left: 65px; white-space: nowrap; }
.tree li i { width: 15px; height: 14px; flex: none; display: flex; align-items: center; background: repeating-linear-gradient(to right, #888 0 1px, transparent 1px 2px) 5px 7px / 9px 1px no-repeat; }
.tree li span { padding: 0 2px; }
.plus i::before, .minus i::before {
  content: "";
  width: 9px;
  height: 9px;
  border: 1px solid #888;
  background: linear-gradient(#224, #224) 1px 3px / 5px 1px no-repeat, #fff;
}
.plus i::before { background: linear-gradient(#224, #224) 1px 3px / 5px 1px no-repeat, linear-gradient(#224, #224) 3px 1px / 1px 5px no-repeat, #fff; }
.tree .sel span { flex: 1; margin-right: 3px; background: #0078d7; color: #fff; }
.tree .child { padding-left: 84px; }
.tree .vbar { height: 268px; }
.tree .vbar .thumb { margin-top: 134px; height: 50px; }
.tree .hbar .thumb { margin-left: 4px; width: 118px; }
.btn { width: 86px; height: 19px; border: 1px solid #adadad; background: #e1e1e1; line-height: 14px; }
.browse { display: block; margin: 8px 0 8px 1px; }
.dialog .check { gap: 2px; }
.dialog > footer { display: flex; justify-content: flex-end; gap: 19px; margin-top: 12px; }
.default { border: 2px solid #0078d7; }
.grip { position: absolute; right: 2px; bottom: 2px; width: 9px; height: 9px; }
```
